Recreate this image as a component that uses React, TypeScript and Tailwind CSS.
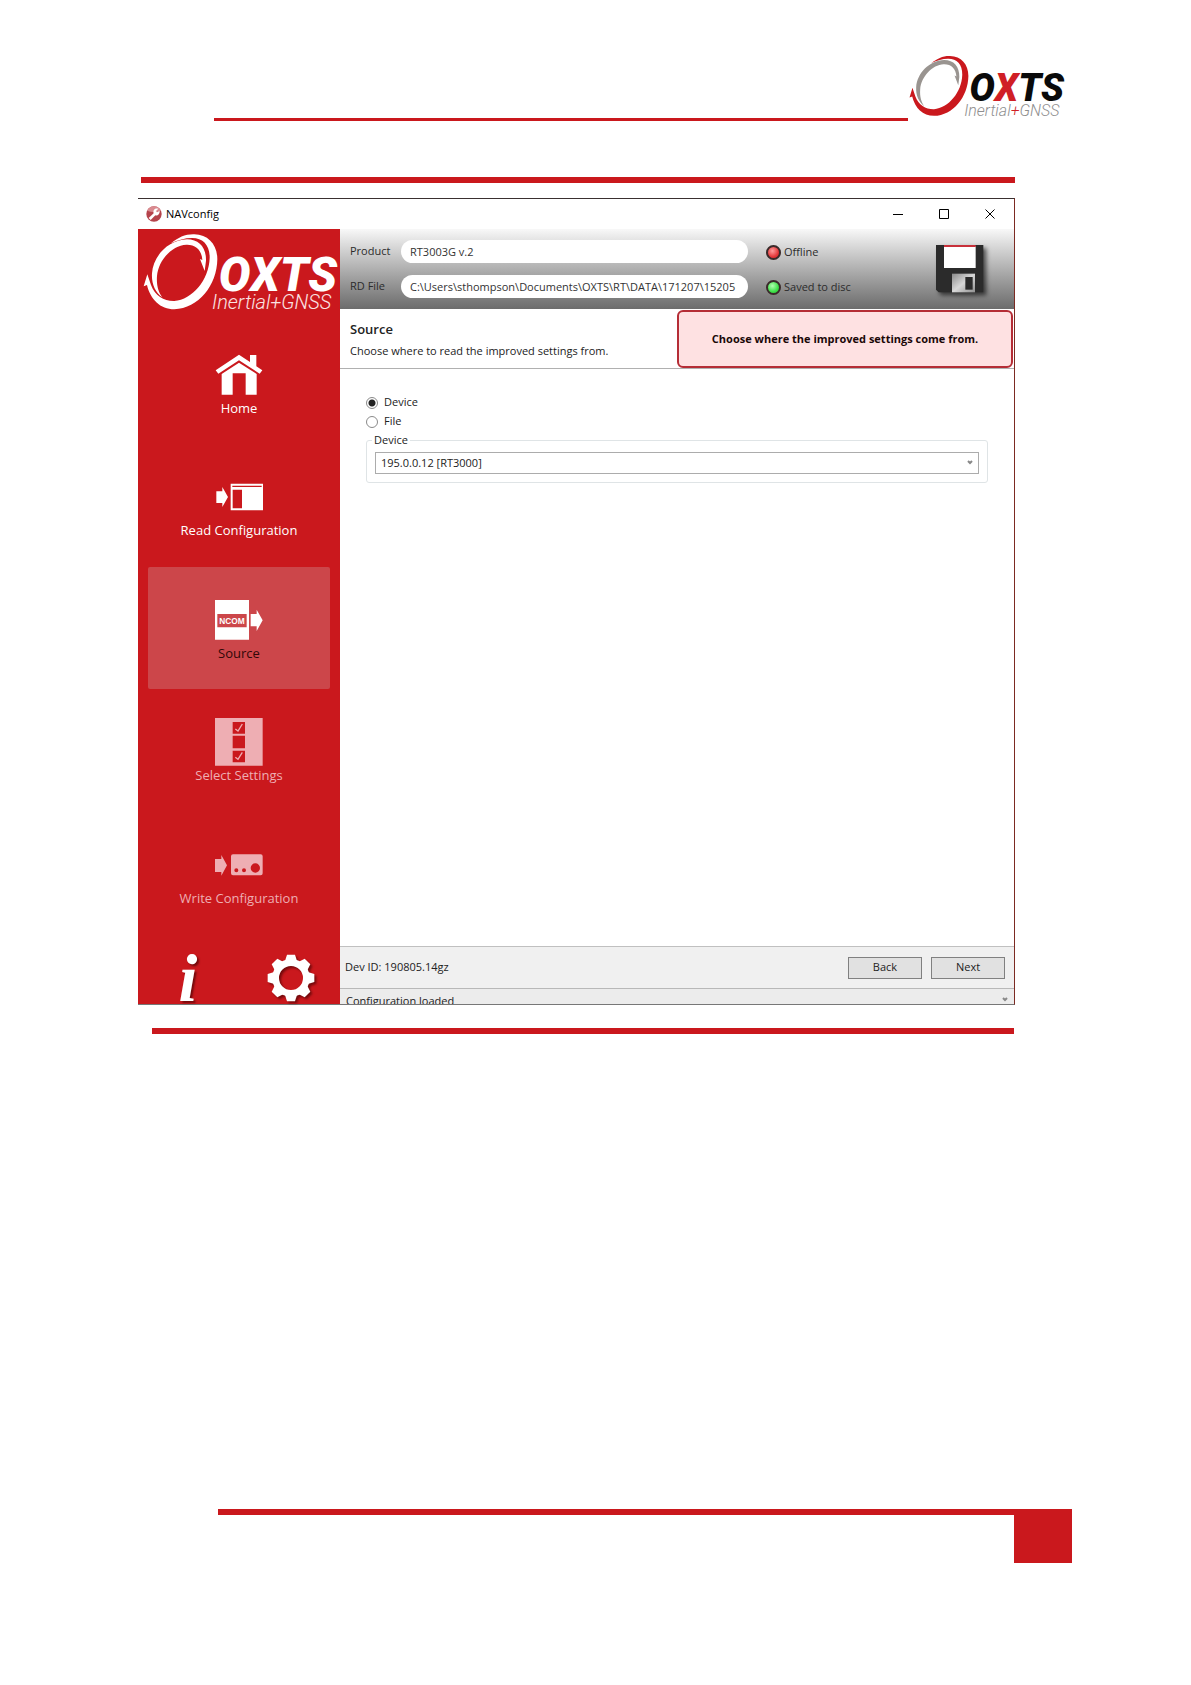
import type { ReactNode } from "react";

type LogoProps = {
  swoosh: string;
  ring: string;
  word: string;
  accent: string;
  tagline: string;
  plus: string;
  className: string;
};

function OxtsLogo({ swoosh, ring, word, accent, tagline, plus, className }: LogoProps) {
  return (
    <svg viewBox="40 188 582 232" className={`overflow-visible ${className}`} role="img" aria-label="OXTS Inertial+GNSS">
      <path
        fill={swoosh}
        d="M42 347 L53 311 L64 343 C76 376 104 392 134 391 C188 387 238 328 240 262 C241 222 218 201 186 202 C166 202 146 208 124 218 C146 200 168 190 194 191 C236 192 263 222 263 266 C262 344 206 414 134 416 C92 416 62 386 52 343 Z"
      />
      <path
        fill={ring}
        d="M98 380 C76 364 65 338 67 308 C70 256 116 208 172 206 C208 206 230 230 229 270 L225 301 L211 265 L218 268 C216 238 198 221 170 222 C128 224 86 268 82 316 C80 344 86 364 98 380 Z"
      />
      <text x="267" y="361" fill={word} fontFamily="Roboto, sans-serif" fontWeight="900" fontStyle="italic" fontSize="142">
        O<tspan fill={accent}>X</tspan>TS
      </text>
      <text x="247" y="416" fill={tagline} fontFamily="Roboto, sans-serif" fontWeight="300" fontStyle="italic" fontSize="60">
        Inertial<tspan fill={plus}>+</tspan>GNSS
      </text>
    </svg>
  );
}

function HomeIcon() {
  return (
    <svg viewBox="0 0 144 144" className="size-12" fill="currentColor" aria-hidden="true">
      <path d="M2 58 L72 11 L105 33 V12 H124 V46 L142 58 L134 68 L72 28 L10 68 Z" />
      <path d="M20 69 L72 35 L125 69 V131 H92 V67 H53 V131 H20 Z" />
    </svg>
  );
}

function ReadIcon() {
  return (
    <svg viewBox="0 0 144 144" className="size-12" fill="currentColor" aria-hidden="true">
      <path d="M4 55 H22 V42 L39 72 L22 102 V90 H4 Z" />
      <path fillRule="evenodd" d="M47 32 H146 V112 H47 Z M52 38 V42 H140 V38 Z M53 50 V106 H81 V50 Z" />
    </svg>
  );
}

function SourceIcon() {
  return (
    <svg viewBox="0 0 144 144" className="size-12" fill="currentColor" aria-hidden="true">
      <path fillRule="evenodd" d="M0 12 H102 V131 H0 Z M7 54 V94 H95 V54 Z" />
      <path d="M107 54 H125 V41 L143 73 L125 105 V91 H107 Z" />
      <text x="51" y="83" textAnchor="middle" fontFamily="Liberation Sans, sans-serif" fontWeight="700" fontSize="25">
        NCOM
      </text>
    </svg>
  );
}

function SelectIcon() {
  return (
    <svg viewBox="0 0 144 144" className="size-12" fill="currentColor" aria-hidden="true">
      <path fillRule="evenodd" d="M0 0 H143 V143 H0 Z M53 12 V47 H90 V12 Z M53 53 V91 H90 V53 Z M53 98 V133 H90 V98 Z" />
      <path d="M61 33 L69 39 L82 18" fill="none" stroke="currentColor" strokeWidth="4" />
      <path d="M61 118 L69 124 L82 103" fill="none" stroke="currentColor" strokeWidth="4" />
    </svg>
  );
}

function WriteIcon() {
  return (
    <svg viewBox="0 0 144 144" className="size-12" fill="currentColor" aria-hidden="true">
      <path d="M0 54 H19 V42 L36 73 L19 104 V93 H0 Z" />
      <path
        fillRule="evenodd"
        d="M54 40 H137 Q143 40 143 46 V97 Q143 103 137 103 H54 Q48 103 48 97 V46 Q48 40 54 40 Z M58 88 a6 6 0 1 0 12 0 a6 6 0 1 0 -12 0 Z M81 88 a6 6 0 1 0 12 0 a6 6 0 1 0 -12 0 Z M107 81 a14 14 0 1 0 28 0 a14 14 0 1 0 -28 0 Z"
      />
    </svg>
  );
}

function GearIcon() {
  const teeth = [0, 45, 90, 135, 180, 225, 270, 315];
  return (
    <svg viewBox="-72 -72 144 144" className="size-12 drop-shadow-[2px_2px_1px_rgba(60,0,0,0.6)]" aria-hidden="true">
      <circle r="46" fill="none" stroke="#fff" strokeWidth="20" />
      {teeth.map((angle) => (
        <path key={angle} fill="#fff" transform={`rotate(${angle})`} d="M-19 -48 L-12 -70 H12 L19 -48 Z" />
      ))}
    </svg>
  );
}

function FloppyIcon() {
  return (
    <svg viewBox="0 0 144 144" className="size-12 drop-shadow-[3px_3px_2px_rgba(0,0,0,0.6)]" aria-hidden="true">
      <defs>
        <linearGradient id="shutter" x1="0" y1="0" x2="1" y2="1">
          <stop offset="0" stopColor="#8a8a8a" />
          <stop offset="0.5" stopColor="#d8d8d8" />
          <stop offset="1" stopColor="#909090" />
        </linearGradient>
      </defs>
      <path fill="#2b2b2b" d="M0 0 H142 V142 H8 L0 134 Z" />
      <path fill="#fff" d="M24 4 H119 V69 H24 Z" />
      <path fill="#c8303a" d="M24 0 H119 V6 H24 Z" />
      <path fill="url(#shutter)" d="M48 86 H117 V142 H48 Z" />
      <path fill="#2b2b2b" d="M88 96 H110 V134 H88 Z" />
    </svg>
  );
}

function AppIcon() {
  return (
    <svg viewBox="0 0 48 48" className="size-4" aria-hidden="true">
      <circle cx="24" cy="24" r="23" fill="#b5434b" />
      <path d="M3 14 A23 23 0 0 1 45 14 Q24 22 3 14 Z" fill="#d98a8f" />
      <path
        d="M8 36 L23 22 C20 11 28 5 37 8 L30 15 L33 19 L41 14 C42 25 34 31 28 28 L14 42 Z"
        fill="#fff"
      />
    </svg>
  );
}

function Led({ color, label }: { color: "red" | "green"; label: string }) {
  const fill =
    color === "red"
      ? "bg-[radial-gradient(circle_at_40%_35%,#ff9c9c,#e43a3c_60%,#c02024)]"
      : "bg-[radial-gradient(circle_at_40%_35%,#b0ffb0,#3fe04a_60%,#22b82e)]";
  return (
    <div className="flex h-6 items-center gap-[3px]">
      <span className={`size-[15px] rounded-full border-2 border-[#3a2a2a] ${fill}`} />
      <span>{label}</span>
    </div>
  );
}

function Chevron() {
  return (
    <svg viewBox="0 0 6 5" className="h-[5px] w-[6px]" fill="none" stroke="#888" strokeWidth="2" aria-hidden="true">
      <path d="M1 1 L3 3 L5 1" />
    </svg>
  );
}

type Step = { label: string; icon: ReactNode; tone: string };

const steps: Step[] = [
  { label: "Home", icon: <HomeIcon />, tone: "text-white" },
  { label: "Read Configuration", icon: <ReadIcon />, tone: "text-white" },
  { label: "Source", icon: <SourceIcon />, tone: "bg-[#cc464a] text-white" },
  { label: "Select Settings", icon: <SelectIcon />, tone: "text-[#eeaeb3]" },
  { label: "Write Configuration", icon: <WriteIcon />, tone: "text-[#eeaeb3]" },
];

function Sidebar() {
  return (
    <aside className="flex w-[202px] shrink-0 flex-col bg-[#ca181d]">
      <OxtsLogo
        className="mt-1 ml-[5px] h-[78px] w-[194px]"
        swoosh="#fff"
        ring="#fff"
        word="#fff"
        accent="#fff"
        tagline="#fbe3e3"
        plus="#fbe3e3"
      />
      <nav className="mt-[11px] grid h-[612px] grid-rows-5 px-[10px]" aria-label="Steps">
        {steps.map((step) => (
          <button
            key={step.label}
            type="button"
            aria-current={step.label === "Source" ? "step" : undefined}
            className={`flex flex-col items-center rounded-[2px] pt-[29px] text-[13px] leading-[18px] ${step.tone}`}
          >
            {step.icon}
            <span className={step.label === "Source" ? "text-[#300808]" : ""}>{step.label}</span>
          </button>
        ))}
      </nav>
      <div className="mt-auto flex items-center justify-between pr-[25px] pl-[38px]">
        <button
          type="button"
          aria-label="About"
          className="h-[52px] w-6 font-['Liberation_Serif',serif] text-[68px] leading-[52px] font-bold text-white italic [text-shadow:2px_2px_2px_rgba(60,0,0,0.6)]"
        >
          i
        </button>
        <button type="button" aria-label="Settings">
          <GearIcon />
        </button>
      </div>
    </aside>
  );
}

function TitleBar() {
  return (
    <div className="flex h-[30px] items-center pr-[10px] pl-2">
      <AppIcon />
      <span className="ml-1 flex-1 text-[11px] text-black">NAVconfig</span>
      <div className="flex items-center gap-[18px]">
        <button type="button" aria-label="Minimize" className="grid h-6 w-7 place-items-center">
          <svg viewBox="0 0 10 10" className="size-[10px]" stroke="#000">
            <path d="M0 5.5 H10" />
          </svg>
        </button>
        <button type="button" aria-label="Maximize" className="grid h-6 w-7 place-items-center">
          <svg viewBox="0 0 10 10" className="size-[10px]" stroke="#000" fill="none">
            <path d="M0.5 0.5 H9.5 V9.5 H0.5 Z" />
          </svg>
        </button>
        <button type="button" aria-label="Close" className="grid h-6 w-7 place-items-center">
          <svg viewBox="0 0 10 10" className="size-[10px]" stroke="#000">
            <path d="M0.5 0.5 L9.5 9.5 M9.5 0.5 L0.5 9.5" />
          </svg>
        </button>
      </div>
    </div>
  );
}

function StatusHeader() {
  const field = "h-[23px] min-w-0 flex-1 rounded-full bg-white px-[9px] text-[#333] outline-none";
  return (
    <div className="flex h-20 items-start bg-linear-to-b from-[#f8f8f8] via-[#b0b0b0] to-[#6c6c6c] pt-[11px] pr-[30px] pl-[10px] text-[11px] text-[#2c2c2c]">
      <div className="flex min-w-0 flex-1 flex-col gap-3">
        <div className="flex items-center">
          <label htmlFor="product" className="w-[51px]">
            Product
          </label>
          <input id="product" readOnly value="RT3003G v.2" className={field} />
        </div>
        <div className="flex items-center">
          <label htmlFor="rdfile" className="w-[51px]">
            RD File
          </label>
          <input
            id="rdfile"
            readOnly
            value="C:\Users\sthompson\Documents\OXTS\RT\DATA\171207\15205"
            className={field}
          />
        </div>
      </div>
      <div className="ml-[18px] flex w-[170px] flex-col gap-[11px]">
        <Led color="red" label="Offline" />
        <Led color="green" label="Saved to disc" />
      </div>
      <button type="button" aria-label="Save" className="mt-[5px]">
        <FloppyIcon />
      </button>
    </div>
  );
}

function SourceForm() {
  const radio =
    "size-3 appearance-none rounded-full border border-[#8a8a8a] bg-white checked:bg-[radial-gradient(circle,#222_0_3px,#fff_4px)]";
  return (
    <form className="min-h-[577px] flex-1 bg-white px-[26px] pt-6 text-[11px] text-[#222]">
      <label className="flex h-[19px] w-fit items-center gap-[6px]">
        <input type="radio" name="source" defaultChecked className={radio} />
        Device
      </label>
      <label className="flex h-[19px] w-fit items-center gap-[6px]">
        <input type="radio" name="source" className={radio} />
        File
      </label>
      <fieldset className="mt-px rounded-[3px] border border-[#dfe4e6] px-2 pb-2">
        <legend className="-ml-[3px] px-[2px] leading-4">
          <label htmlFor="device">Device</label>
        </legend>
        <div className="relative mt-1">
          <select
            id="device"
            className="block h-[22px] w-full appearance-none border border-[#acacac] bg-white pr-6 pl-[5px] leading-5"
          >
            <option>195.0.0.12 [RT3000]</option>
          </select>
          <span className="pointer-events-none absolute top-2 right-[6px]">
            <Chevron />
          </span>
        </div>
      </fieldset>
    </form>
  );
}

function NavConfigWindow() {
  return (
    <section className="flex flex-col border-t border-r border-b border-t-[#3a3030] border-r-[#7c2a22] border-b-[#777] bg-white">
      <TitleBar />
      <div className="flex">
        <Sidebar />
        <div className="flex min-w-0 flex-1 flex-col">
          <StatusHeader />
          <div className="flex h-[60px] border-b border-[#b0b0b0] bg-white">
            <div className="flex-1 pt-[10px] pl-[10px] text-[#222]">
              <h1 className="text-[13px] leading-5 font-semibold">Source</h1>
              <p className="mt-[2px] text-[11px] leading-5">Choose where to read the improved settings from.</p>
            </div>
            <p className="mt-px mr-px flex h-[58px] w-[336px] items-center justify-center rounded-md border-2 border-[#b52d36] bg-[#fee1e2] text-[11px] font-bold text-[#1a0808]">
              Choose where the improved settings come from.
            </p>
          </div>
          <SourceForm />
          <div className="flex h-[42px] items-center gap-[9px] border-t border-[#c0c0c0] bg-[#f0f0f0] pr-[9px] pl-[5px] text-[11px] text-[#222]">
            <span className="flex-1">Dev ID: 190805.14gz</span>
            <button type="button" className="h-[22px] w-[74px] border border-[#808080] bg-[#e1e1e1]">
              Back
            </button>
            <button type="button" className="h-[22px] w-[74px] border border-[#808080] bg-[#e1e1e1]">
              Next
            </button>
          </div>
          <button
            type="button"
            className="flex h-4 items-start justify-between overflow-hidden border-t border-[#b8b8b8] bg-[#ececec] pr-[6px] pl-[6px] text-left text-[11px] leading-6 text-[#222]"
          >
            <span>Configuration loaded</span>
            <span className="mt-2 flex">
              <Chevron />
            </span>
          </button>
        </div>
      </div>
    </section>
  );
}

export default function App() {
  return (
    <div className="min-h-screen bg-white pb-[122px] font-['Open_Sans',sans-serif]">
      <header className="flex items-end pt-[54px] pr-[127px] pl-[214px]">
        <div className="mb-[-3px] h-[3px] flex-1 bg-[#ca181d]" />
        <OxtsLogo
          className="ml-px h-16 w-[155px]"
          swoosh="#ca181d"
          ring="#999490"
          word="#0a0a0a"
          accent="#d01f26"
          tagline="#8f8f8f"
          plus="#d01f26"
        />
      </header>
      <main className="mt-[59px] pr-[176px] pl-[138px]">
        <div className="ml-[3px] h-[6px] bg-[#ca181d]" />
        <div className="mt-[15px]">
          <NavConfigWindow />
        </div>
        <div className="mt-[23px] mr-px ml-[14px] h-[6px] bg-[#ca181d]" />
      </main>
      <footer className="mt-[475px] flex items-start pr-[119px] pl-[218px]">
        <div className="h-[6px] flex-1 bg-[#ca181d]" />
        <div className="h-[54px] w-[58px] bg-[#ca181d]" />
      </footer>
    </div>
  );
}
